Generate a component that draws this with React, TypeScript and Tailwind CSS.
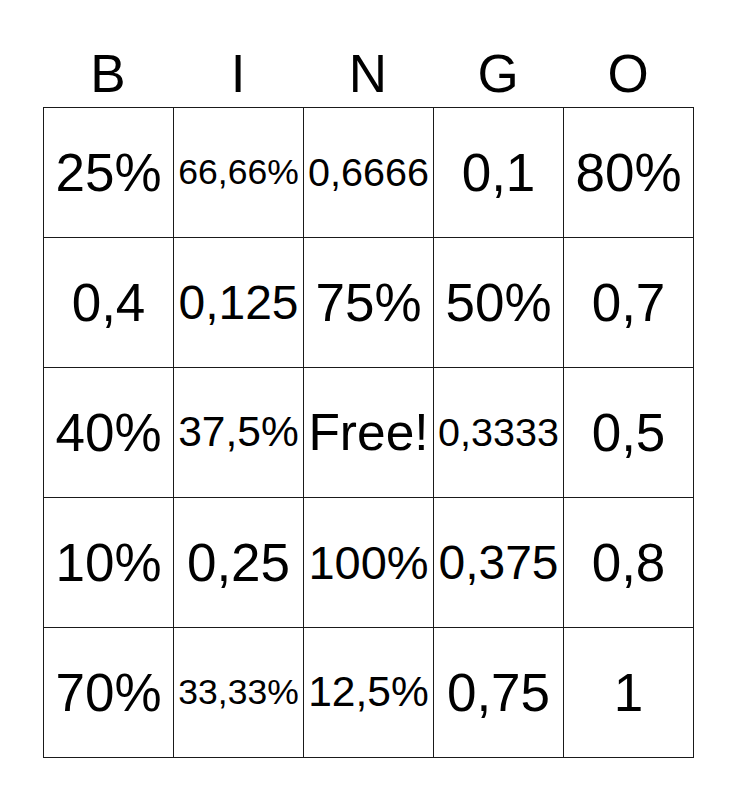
import React from 'react';

type Cell = { label: string; size: string };

const letters = ['B', 'I', 'N', 'G', 'O'];

// font sizes are shrunk so the longer values fit the 130px cell
const rows: Cell[][] = [
  [
    { label: '25%', size: 'text-[53px]' },
    { label: '66,66%', size: 'text-[35.5px]' },
    { label: '0,6666', size: 'text-[39.5px]' },
    { label: '0,1', size: 'text-[53px]' },
    { label: '80%', size: 'text-[53px]' },
  ],
  [
    { label: '0,4', size: 'text-[53px]' },
    { label: '0,125', size: 'text-[48px]' },
    { label: '75%', size: 'text-[53px]' },
    { label: '50%', size: 'text-[53px]' },
    { label: '0,7', size: 'text-[53px]' },
  ],
  [
    { label: '40%', size: 'text-[53px]' },
    { label: '37,5%', size: 'text-[42.5px]' },
    { label: 'Free!', size: 'text-[51.5px]' },
    { label: '0,3333', size: 'text-[39.5px]' },
    { label: '0,5', size: 'text-[53px]' },
  ],
  [
    { label: '10%', size: 'text-[53px]' },
    { label: '0,25', size: 'text-[53px]' },
    { label: '100%', size: 'text-[47px]' },
    { label: '0,375', size: 'text-[48px]' },
    { label: '0,8', size: 'text-[53px]' },
  ],
  [
    { label: '70%', size: 'text-[53px]' },
    { label: '33,33%', size: 'text-[35.5px]' },
    { label: '12,5%', size: 'text-[42.5px]' },
    { label: '0,75', size: 'text-[53px]' },
    { label: '1', size: 'text-[53px]' },
  ],
];

export default function App() {
  return (
    <div className="w-[736px] h-[800px] bg-white text-black font-['Liberation_Sans',Arial,sans-serif]">
      <div className="ml-[43px] w-[651px] pt-[47px] h-[107px] grid grid-cols-[repeat(5,130px)]">
        {letters.map((l) => (
          <div key={l} className="text-center text-[53px] leading-[53px]">
            {l}
          </div>
        ))}
      </div>
      <div className="ml-[43px] w-[651px] grid grid-cols-[repeat(5,130px)] border-l border-t border-[#1a1a1a]">
        {rows.flat().map((c, i) => (
          <div
            key={i}
            className={`h-[130px] flex items-center justify-center border-r border-b border-[#1a1a1a] leading-none whitespace-nowrap ${c.size}`}
          >
            {c.label}
          </div>
        ))}
      </div>
    </div>
  );
}
